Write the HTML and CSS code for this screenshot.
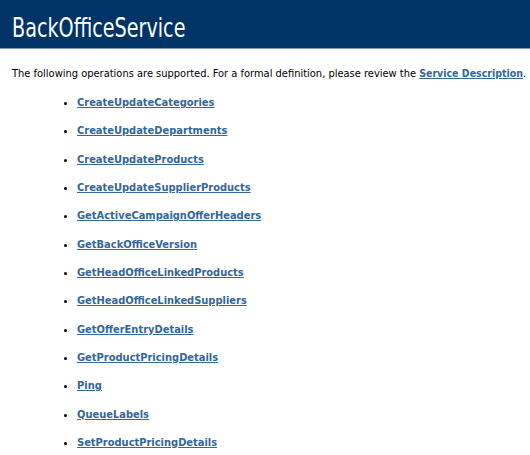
FILE: index.html
```html
<!DOCTYPE html>
<html>
<head>
<meta charset="utf-8">
<link rel="stylesheet" href="styles.css">
</head>
<body>
<div class="content">
  <h1 class="heading1"><span class="title">BackOfficeService</span></h1>
  <p class="intro">The following operations are supported. For a formal definition, please review the <a href="#">Service Description</a>.</p>
  <ul class="ops">
    <li><a href="#">CreateUpdateCategories</a></li>
    <li><a href="#">CreateUpdateDepartments</a></li>
    <li><a href="#">CreateUpdateProducts</a></li>
    <li><a href="#">CreateUpdateSupplierProducts</a></li>
    <li><a href="#">GetActiveCampaignOfferHeaders</a></li>
    <li><a href="#">GetBackOfficeVersion</a></li>
    <li><a href="#">GetHeadOfficeLinkedProducts</a></li>
    <li><a href="#">GetHeadOfficeLinkedSuppliers</a></li>
    <li><a href="#">GetOfferEntryDetails</a></li>
    <li><a href="#">GetProductPricingDetails</a></li>
    <li><a href="#">Ping</a></li>
    <li><a href="#">QueueLabels</a></li>
    <li><a href="#">SetProductPricingDetails</a></li>
  </ul>
</div>
</body>
</html>
```
FILE: styles.css
```css
html, body {
  margin: 0;
  padding: 0;
  background: #ffffff;
  color: #000000;
}
body {
  font-family: "DejaVu Sans Condensed", "DejaVu Sans", sans-serif;
  overflow: hidden;
}
.heading1 {
  margin: 0;
  background: #003366;
  color: #ffffff;
  font-family: "DejaVu Sans Condensed", "DejaVu Sans", sans-serif;
  font-weight: normal;
  font-size: 26px;
  line-height: 30px;
  height: 49px;
  box-sizing: border-box;
  padding: 13px 0 0 12px;
  border-bottom: 1px solid #7d9bc1;
}
.title {
  display: inline-block;
  transform: scaleX(0.82);
  transform-origin: left center;
}
.intro {
  margin: 17px 0 0 12px;
  font-size: 11px;
  line-height: 14px;
  white-space: nowrap;
}
a {
  color: #336699;
  font-weight: bold;
  text-decoration: underline;
}
.intro a {
  font-size: 10.5px;
}
.ops {
  margin: 15px 0 0 0;
  padding-left: 77px;
  font-size: 11px;
  line-height: 14px;
}
.ops li {
  height: 28.33px;
}
```
